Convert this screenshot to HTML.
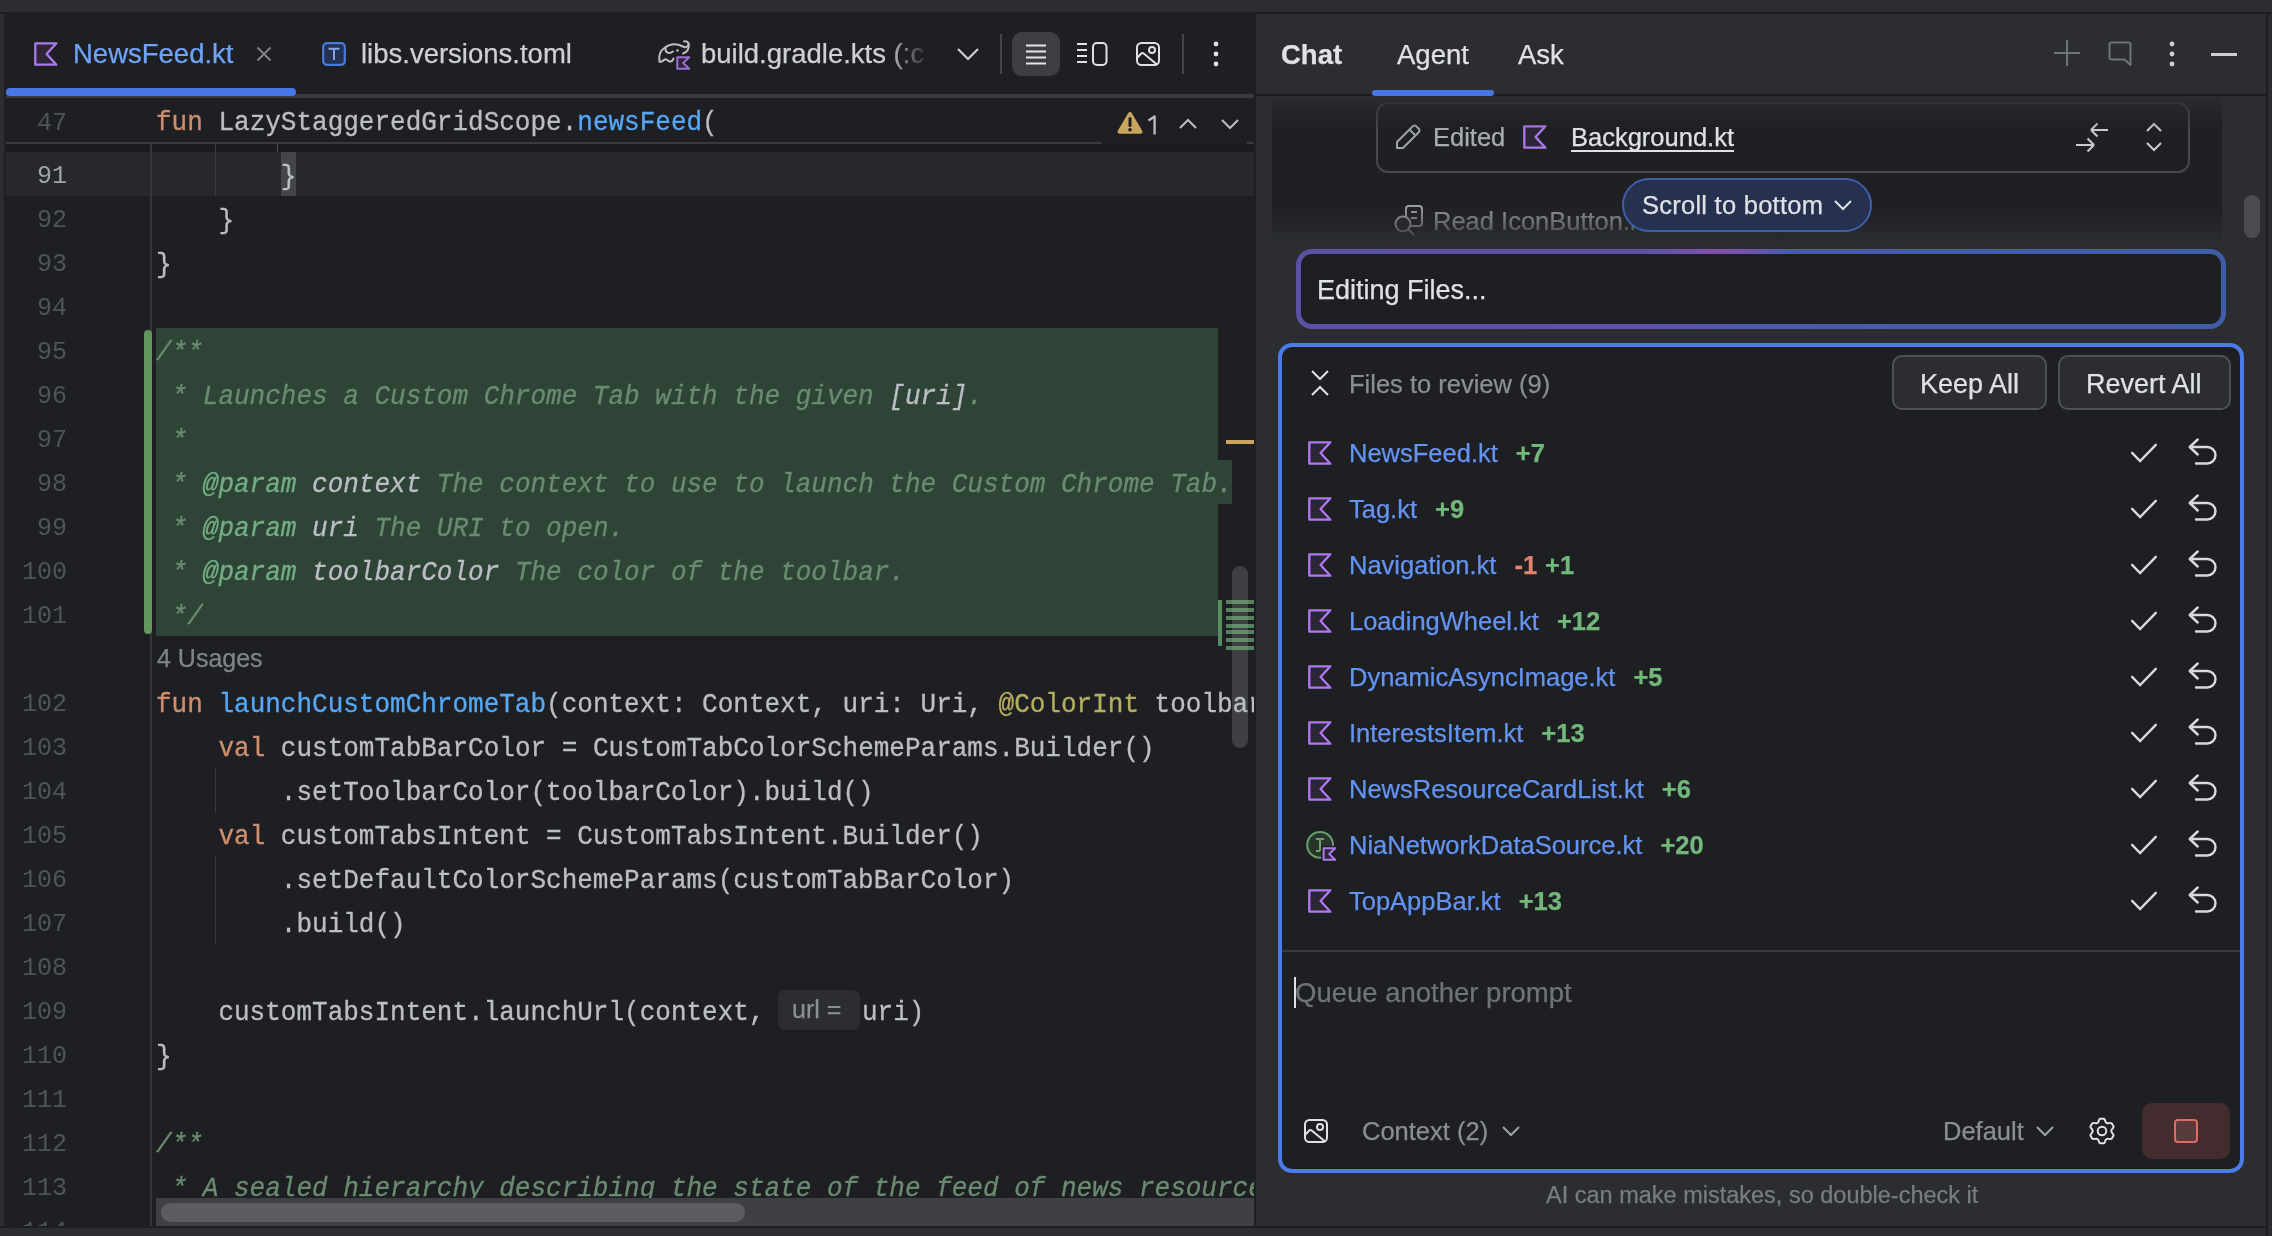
<!DOCTYPE html>
<html><head><meta charset="utf-8"><style>
html,body{margin:0;padding:0;}
body{width:2272px;height:1236px;overflow:hidden;background:#2b2d30;position:relative;font-family:'Liberation Sans',sans-serif;}
body div, body svg{position:absolute;white-space:pre;}
body div{-webkit-text-stroke-width:0.25px;}
body div span{position:static;}
</style></head><body>
<div style="left:0;top:0;width:2272px;height:1236px;will-change:transform">
<div style="left:0px;top:12px;width:2272px;height:2px;background:#1e1f22"></div>
<div style="left:4px;top:12px;width:1250px;height:1214px;background:#1e1f22"></div>
<div style="left:1254px;top:12px;width:2px;height:1216px;background:#1e1f22"></div>
<div style="left:0px;top:1226px;width:2266px;height:2px;background:#1e1f22"></div>
<div style="left:2266px;top:12px;width:2px;height:1224px;background:#1e1f22"></div>
<div style="left:6px;top:94px;width:1248px;height:4px;background:#393b40"></div>
<div style="left:6px;top:88px;width:290px;height:8px;background:#4677e8;border-radius:4px"></div>
<svg style="left:34px;top:42px;" width="24" height="24" viewBox="0 0 24 24" fill="none"><path d="M1.3 1.3H22.4L12.6 12L22.4 22.7H1.3Z" fill="#2d2637" stroke="#ae79ee" stroke-width="2.3" stroke-linejoin="round"/></svg>
<div style="left:73px;top:35.47px;height:38px;line-height:38px;font-family:'Liberation Sans',sans-serif;font-size:27.5px;color:#6fa2f8;font-weight:400;letter-spacing:0px">NewsFeed.kt</div>
<svg style="left:256px;top:46px;" width="16" height="16" viewBox="0 0 16 16" fill="none"><path d="M1.5 1.5L14.5 14.5M14.5 1.5L1.5 14.5" stroke="#7f8186" stroke-width="2"/></svg>
<svg style="left:322px;top:42px;" width="24" height="24" viewBox="0 0 24 24" fill="none"><rect x="1.2" y="1.2" width="21.6" height="21.6" rx="3.5" fill="#243150" stroke="#4a78dc" stroke-width="2.2"/><path d="M6.5 6.8H17.5M12 6.8V18" stroke="#86a6ea" stroke-width="2"/></svg>
<div style="left:361px;top:35.47px;height:38px;line-height:38px;font-family:'Liberation Sans',sans-serif;font-size:27.5px;color:#ced0d6;font-weight:400;">libs.versions.toml</div>
<svg style="left:650px;top:30px;" width="50" height="50" viewBox="0 0 50 50" fill="none"><g stroke="#bdbfc4" stroke-width="2" stroke-linecap="round" fill="none"><path d="M9.5 31.5C8.5 26 10.5 20.5 15 17.5C20 13.5 27 13.5 33 16.5C35.5 17.8 37.5 17 38.3 15C39 12.5 37 10.5 34 11.5"/><path d="M38.6 13.5C39.5 18 37.5 22.5 33 23.5"/><path d="M15.5 17.5C15 22 18 25 23 21.5"/><path d="M9.5 31.5C11 32.5 13 31 14.5 29.5C16 28.5 18 31 19.5 31.5C21.5 32 23 30 23.5 28.5"/></g><circle cx="27.5" cy="20.5" r="1.3" fill="#bdbfc4"/><path d="M27.3 27.3H39.2L33.2 33L39.2 38.7H27.3Z" fill="#2d2637" stroke="#9c6fd6" stroke-width="2" stroke-linejoin="round"/></svg>
<div style="left:701px;top:35.47px;height:38px;line-height:38px;font-family:'Liberation Sans',sans-serif;font-size:27.5px;color:#ced0d6;font-weight:400;width:230px;overflow:hidden;-webkit-mask-image:linear-gradient(90deg,#000 80%,transparent 100%)">build.gradle.kts (:c</div>
<svg style="left:956px;top:46px;" width="24" height="16" viewBox="0 0 24 16" fill="none"><path d="M2 3L12 13L22 3" stroke="#ced0d6" stroke-width="2.2"/></svg>
<div style="left:1000px;top:34px;width:2px;height:40px;background:#43454a"></div>
<div style="left:1012px;top:32px;width:48px;height:44px;background:#3c3e43;border-radius:10px"></div>
<svg style="left:1024px;top:42px;" width="24" height="24" viewBox="0 0 24 24" fill="none"><path d="M2 3.5H22M2 9.5H22M2 15.5H22M2 21.5H22" stroke="#e4e5e8" stroke-width="2"/></svg>
<svg style="left:1076px;top:40px;" width="32" height="28" viewBox="0 0 32 28" fill="none"><path d="M1 4H11M1 10H11M1 16H11M1 22H11" stroke="#dfe1e5" stroke-width="2"/><rect x="17" y="3" width="13.5" height="22" rx="4" stroke="#dfe1e5" stroke-width="2"/></svg>
<svg style="left:1134px;top:40px;" width="28" height="28" viewBox="0 0 28 28" fill="none"><rect x="3" y="3" width="22" height="22" rx="4.5" stroke="#dfe1e5" stroke-width="2"/><circle cx="18" cy="10" r="3" stroke="#dfe1e5" stroke-width="2"/><path d="M3.5 17.5L7 13.8Q8.3 12.4 9.7 13.6L23 24.5" stroke="#dfe1e5" stroke-width="2" stroke-linejoin="round"/></svg>
<div style="left:1182px;top:34px;width:2px;height:40px;background:#43454a"></div>
<svg style="left:1210px;top:40px;" width="12" height="30" viewBox="0 0 12 30" fill="none"><circle cx="6" cy="4" r="2.4" fill="#dfe1e5"/><circle cx="6" cy="14" r="2.4" fill="#dfe1e5"/><circle cx="6" cy="24" r="2.4" fill="#dfe1e5"/></svg>
<div style="left:6px;top:152px;width:1248px;height:44px;background:#26282e"></div>
<div style="left:0px;width:67px;top:107.35px;height:34px;line-height:34px;text-align:right;font-family:'Liberation Mono',monospace;font-size:25px;color:#4f545b;-webkit-text-stroke-width:0">47</div>
<div style="left:156.0px;top:105.08px;height:36px;line-height:36px;font-family:'Liberation Mono',monospace;font-size:26px;color:#bcbec4;font-weight:400;transform:scaleY(1.06);transform-origin:0 24.92px;-webkit-text-stroke:0.3px;"><span style="color:#cf8e6d;">fun </span><span style="color:#bcbec4;">LazyStaggeredGridScope.</span><span style="color:#56a8f5;">newsFeed</span><span style="color:#bcbec4;">(</span></div>
<div style="left:6px;top:142px;width:1096px;height:2px;background:#393b40"></div>
<div style="left:1247px;top:142px;width:7px;height:2px;background:#393b40"></div>
<div style="left:6px;top:144px;width:1248px;height:8px;background:#1b1c1f"></div>
<div style="left:150px;top:144px;width:2px;height:1082px;background:#35373b"></div>
<svg style="left:1116px;top:110px;" width="28" height="26" viewBox="0 0 28 26" fill="none"><path d="M14 4L24.5 21.8H3.5Z" fill="#c8a45c" stroke="#c8a45c" stroke-width="4" stroke-linejoin="round"/><path d="M14 8.5V15.5" stroke="#1e1f22" stroke-width="3" stroke-linecap="round"/><circle cx="14" cy="19.8" r="1.8" fill="#1e1f22"/></svg>
<svg style="left:1146px;top:114.5px;" width="14" height="21" viewBox="0 0 14 21" fill="none"><path d="M2.5 5.5L8.6 1.5V19.5" stroke="#bcbec4" stroke-width="2.3" stroke-linejoin="round"/></svg>
<svg style="left:1178px;top:116px;" width="20" height="16" viewBox="0 0 20 16" fill="none"><path d="M2 12L10 4L18 12" stroke="#bcbec4" stroke-width="2"/></svg>
<svg style="left:1220px;top:116px;" width="20" height="16" viewBox="0 0 20 16" fill="none"><path d="M2 4L10 12L18 4" stroke="#bcbec4" stroke-width="2"/></svg>
<div style="left:215px;top:144px;width:1px;height:52px;background:#393b40"></div>
<div style="left:277px;top:144px;width:1px;height:8px;background:#4e5157"></div>
<div style="left:215px;top:768px;width:1px;height:44px;background:#393b40"></div>
<div style="left:215px;top:856px;width:1px;height:88px;background:#393b40"></div>
<div style="left:156px;top:328px;width:1062px;height:308px;background:#2e4436"></div>
<div style="left:1218px;top:460px;width:14px;height:44px;background:#2e4436"></div>
<div style="left:144px;top:330px;width:8px;height:304px;background:#62965f;border-radius:4px"></div>
<div style="left:281px;top:152px;width:15px;height:44px;background:#43454a"></div>
<div style="left:1232px;top:566px;width:16px;height:182px;background:#3e4044;border-radius:8px"></div>
<div style="left:0;top:144px;width:1254px;height:1082px;overflow:hidden">
<div style="left:0px;width:67px;top:16.35px;height:34px;line-height:34px;text-align:right;font-family:'Liberation Mono',monospace;font-size:25px;color:#a1a3ab;-webkit-text-stroke-width:0">91</div>
<div style="left:156.0px;top:15.08px;height:36px;line-height:36px;font-family:'Liberation Mono',monospace;font-size:26px;color:#bcbec4;font-weight:400;transform:scaleY(1.06);transform-origin:0 24.92px;-webkit-text-stroke:0.3px;"><span style="color:#bcbec4;">        }</span></div>
<div style="left:0px;width:67px;top:60.35px;height:34px;line-height:34px;text-align:right;font-family:'Liberation Mono',monospace;font-size:25px;color:#4f545b;-webkit-text-stroke-width:0">92</div>
<div style="left:156.0px;top:59.08px;height:36px;line-height:36px;font-family:'Liberation Mono',monospace;font-size:26px;color:#bcbec4;font-weight:400;transform:scaleY(1.06);transform-origin:0 24.92px;-webkit-text-stroke:0.3px;"><span style="color:#bcbec4;">    }</span></div>
<div style="left:0px;width:67px;top:104.35px;height:34px;line-height:34px;text-align:right;font-family:'Liberation Mono',monospace;font-size:25px;color:#4f545b;-webkit-text-stroke-width:0">93</div>
<div style="left:156.0px;top:103.08px;height:36px;line-height:36px;font-family:'Liberation Mono',monospace;font-size:26px;color:#bcbec4;font-weight:400;transform:scaleY(1.06);transform-origin:0 24.92px;-webkit-text-stroke:0.3px;"><span style="color:#bcbec4;">}</span></div>
<div style="left:0px;width:67px;top:148.35px;height:34px;line-height:34px;text-align:right;font-family:'Liberation Mono',monospace;font-size:25px;color:#4f545b;-webkit-text-stroke-width:0">94</div>
<div style="left:0px;width:67px;top:192.35px;height:34px;line-height:34px;text-align:right;font-family:'Liberation Mono',monospace;font-size:25px;color:#4f545b;-webkit-text-stroke-width:0">95</div>
<div style="left:156.0px;top:191.08px;height:36px;line-height:36px;font-family:'Liberation Mono',monospace;font-size:26px;color:#bcbec4;font-weight:400;transform:scaleY(1.06);transform-origin:0 24.92px;-webkit-text-stroke:0.3px;"><span style="color:#6a8b71;font-style:italic;">/**</span></div>
<div style="left:0px;width:67px;top:236.35px;height:34px;line-height:34px;text-align:right;font-family:'Liberation Mono',monospace;font-size:25px;color:#4f545b;-webkit-text-stroke-width:0">96</div>
<div style="left:156.0px;top:235.08px;height:36px;line-height:36px;font-family:'Liberation Mono',monospace;font-size:26px;color:#bcbec4;font-weight:400;transform:scaleY(1.06);transform-origin:0 24.92px;-webkit-text-stroke:0.3px;"><span style="color:#6a8b71;font-style:italic;"> * Launches a Custom Chrome Tab with the given </span><span style="color:#bcbec4;font-style:italic;">[uri]</span><span style="color:#6a8b71;font-style:italic;">.</span></div>
<div style="left:0px;width:67px;top:280.35px;height:34px;line-height:34px;text-align:right;font-family:'Liberation Mono',monospace;font-size:25px;color:#4f545b;-webkit-text-stroke-width:0">97</div>
<div style="left:156.0px;top:279.08px;height:36px;line-height:36px;font-family:'Liberation Mono',monospace;font-size:26px;color:#bcbec4;font-weight:400;transform:scaleY(1.06);transform-origin:0 24.92px;-webkit-text-stroke:0.3px;"><span style="color:#6a8b71;font-style:italic;"> *</span></div>
<div style="left:0px;width:67px;top:324.35px;height:34px;line-height:34px;text-align:right;font-family:'Liberation Mono',monospace;font-size:25px;color:#4f545b;-webkit-text-stroke-width:0">98</div>
<div style="left:156.0px;top:323.08px;height:36px;line-height:36px;font-family:'Liberation Mono',monospace;font-size:26px;color:#bcbec4;font-weight:400;transform:scaleY(1.06);transform-origin:0 24.92px;-webkit-text-stroke:0.3px;"><span style="color:#6a8b71;font-style:italic;"> * </span><span style="color:#72ad83;font-style:italic;">@param</span><span style="color:#6a8b71;font-style:italic;"> </span><span style="color:#bcbec4;font-style:italic;">context</span><span style="color:#6a8b71;font-style:italic;"> The context to use to launch the Custom Chrome Tab.</span></div>
<div style="left:0px;width:67px;top:368.35px;height:34px;line-height:34px;text-align:right;font-family:'Liberation Mono',monospace;font-size:25px;color:#4f545b;-webkit-text-stroke-width:0">99</div>
<div style="left:156.0px;top:367.08px;height:36px;line-height:36px;font-family:'Liberation Mono',monospace;font-size:26px;color:#bcbec4;font-weight:400;transform:scaleY(1.06);transform-origin:0 24.92px;-webkit-text-stroke:0.3px;"><span style="color:#6a8b71;font-style:italic;"> * </span><span style="color:#72ad83;font-style:italic;">@param</span><span style="color:#6a8b71;font-style:italic;"> </span><span style="color:#bcbec4;font-style:italic;">uri</span><span style="color:#6a8b71;font-style:italic;"> The URI to open.</span></div>
<div style="left:0px;width:67px;top:412.35px;height:34px;line-height:34px;text-align:right;font-family:'Liberation Mono',monospace;font-size:25px;color:#4f545b;-webkit-text-stroke-width:0">100</div>
<div style="left:156.0px;top:411.08px;height:36px;line-height:36px;font-family:'Liberation Mono',monospace;font-size:26px;color:#bcbec4;font-weight:400;transform:scaleY(1.06);transform-origin:0 24.92px;-webkit-text-stroke:0.3px;"><span style="color:#6a8b71;font-style:italic;"> * </span><span style="color:#72ad83;font-style:italic;">@param</span><span style="color:#6a8b71;font-style:italic;"> </span><span style="color:#bcbec4;font-style:italic;">toolbarColor</span><span style="color:#6a8b71;font-style:italic;"> The color of the toolbar.</span></div>
<div style="left:0px;width:67px;top:456.35px;height:34px;line-height:34px;text-align:right;font-family:'Liberation Mono',monospace;font-size:25px;color:#4f545b;-webkit-text-stroke-width:0">101</div>
<div style="left:156.0px;top:455.08px;height:36px;line-height:36px;font-family:'Liberation Mono',monospace;font-size:26px;color:#bcbec4;font-weight:400;transform:scaleY(1.06);transform-origin:0 24.92px;-webkit-text-stroke:0.3px;"><span style="color:#6a8b71;font-style:italic;"> */</span></div>
<div style="left:157px;top:497.33px;height:35px;line-height:35px;font-family:'Liberation Sans',sans-serif;font-size:25px;color:#80848b;font-weight:400;">4 Usages</div>
<div style="left:0px;width:67px;top:544.35px;height:34px;line-height:34px;text-align:right;font-family:'Liberation Mono',monospace;font-size:25px;color:#4f545b;-webkit-text-stroke-width:0">102</div>
<div style="left:156.0px;top:543.08px;height:36px;line-height:36px;font-family:'Liberation Mono',monospace;font-size:26px;color:#bcbec4;font-weight:400;transform:scaleY(1.06);transform-origin:0 24.92px;-webkit-text-stroke:0.3px;"><span style="color:#cf8e6d;">fun </span><span style="color:#56a8f5;">launchCustomChromeTab</span><span style="color:#bcbec4;">(context: Context, uri: Uri, </span><span style="color:#b3ae60;">@ColorInt</span><span style="color:#bcbec4;"> toolbarColor: Int) {</span></div>
<div style="left:0px;width:67px;top:588.35px;height:34px;line-height:34px;text-align:right;font-family:'Liberation Mono',monospace;font-size:25px;color:#4f545b;-webkit-text-stroke-width:0">103</div>
<div style="left:156.0px;top:587.08px;height:36px;line-height:36px;font-family:'Liberation Mono',monospace;font-size:26px;color:#bcbec4;font-weight:400;transform:scaleY(1.06);transform-origin:0 24.92px;-webkit-text-stroke:0.3px;"><span style="color:#bcbec4;">    </span><span style="color:#cf8e6d;">val </span><span style="color:#bcbec4;">customTabBarColor = CustomTabColorSchemeParams.Builder()</span></div>
<div style="left:0px;width:67px;top:632.35px;height:34px;line-height:34px;text-align:right;font-family:'Liberation Mono',monospace;font-size:25px;color:#4f545b;-webkit-text-stroke-width:0">104</div>
<div style="left:156.0px;top:631.08px;height:36px;line-height:36px;font-family:'Liberation Mono',monospace;font-size:26px;color:#bcbec4;font-weight:400;transform:scaleY(1.06);transform-origin:0 24.92px;-webkit-text-stroke:0.3px;"><span style="color:#bcbec4;">        .setToolbarColor(toolbarColor).build()</span></div>
<div style="left:0px;width:67px;top:676.35px;height:34px;line-height:34px;text-align:right;font-family:'Liberation Mono',monospace;font-size:25px;color:#4f545b;-webkit-text-stroke-width:0">105</div>
<div style="left:156.0px;top:675.08px;height:36px;line-height:36px;font-family:'Liberation Mono',monospace;font-size:26px;color:#bcbec4;font-weight:400;transform:scaleY(1.06);transform-origin:0 24.92px;-webkit-text-stroke:0.3px;"><span style="color:#bcbec4;">    </span><span style="color:#cf8e6d;">val </span><span style="color:#bcbec4;">customTabsIntent = CustomTabsIntent.Builder()</span></div>
<div style="left:0px;width:67px;top:720.35px;height:34px;line-height:34px;text-align:right;font-family:'Liberation Mono',monospace;font-size:25px;color:#4f545b;-webkit-text-stroke-width:0">106</div>
<div style="left:156.0px;top:719.08px;height:36px;line-height:36px;font-family:'Liberation Mono',monospace;font-size:26px;color:#bcbec4;font-weight:400;transform:scaleY(1.06);transform-origin:0 24.92px;-webkit-text-stroke:0.3px;"><span style="color:#bcbec4;">        .setDefaultColorSchemeParams(customTabBarColor)</span></div>
<div style="left:0px;width:67px;top:764.35px;height:34px;line-height:34px;text-align:right;font-family:'Liberation Mono',monospace;font-size:25px;color:#4f545b;-webkit-text-stroke-width:0">107</div>
<div style="left:156.0px;top:763.08px;height:36px;line-height:36px;font-family:'Liberation Mono',monospace;font-size:26px;color:#bcbec4;font-weight:400;transform:scaleY(1.06);transform-origin:0 24.92px;-webkit-text-stroke:0.3px;"><span style="color:#bcbec4;">        .build()</span></div>
<div style="left:0px;width:67px;top:808.35px;height:34px;line-height:34px;text-align:right;font-family:'Liberation Mono',monospace;font-size:25px;color:#4f545b;-webkit-text-stroke-width:0">108</div>
<div style="left:0px;width:67px;top:852.35px;height:34px;line-height:34px;text-align:right;font-family:'Liberation Mono',monospace;font-size:25px;color:#4f545b;-webkit-text-stroke-width:0">109</div>
<div style="left:156.0px;top:851.08px;height:36px;line-height:36px;font-family:'Liberation Mono',monospace;font-size:26px;color:#bcbec4;font-weight:400;transform:scaleY(1.06);transform-origin:0 24.92px;-webkit-text-stroke:0.3px;"><span style="color:#bcbec4;">    customTabsIntent.launchUrl(context, </span></div>
<div style="left:0px;width:67px;top:896.35px;height:34px;line-height:34px;text-align:right;font-family:'Liberation Mono',monospace;font-size:25px;color:#4f545b;-webkit-text-stroke-width:0">110</div>
<div style="left:156.0px;top:895.08px;height:36px;line-height:36px;font-family:'Liberation Mono',monospace;font-size:26px;color:#bcbec4;font-weight:400;transform:scaleY(1.06);transform-origin:0 24.92px;-webkit-text-stroke:0.3px;"><span style="color:#bcbec4;">}</span></div>
<div style="left:0px;width:67px;top:940.35px;height:34px;line-height:34px;text-align:right;font-family:'Liberation Mono',monospace;font-size:25px;color:#4f545b;-webkit-text-stroke-width:0">111</div>
<div style="left:0px;width:67px;top:984.35px;height:34px;line-height:34px;text-align:right;font-family:'Liberation Mono',monospace;font-size:25px;color:#4f545b;-webkit-text-stroke-width:0">112</div>
<div style="left:156.0px;top:983.08px;height:36px;line-height:36px;font-family:'Liberation Mono',monospace;font-size:26px;color:#bcbec4;font-weight:400;transform:scaleY(1.06);transform-origin:0 24.92px;-webkit-text-stroke:0.3px;"><span style="color:#6a8b71;font-style:italic;">/**</span></div>
<div style="left:0px;width:67px;top:1028.35px;height:34px;line-height:34px;text-align:right;font-family:'Liberation Mono',monospace;font-size:25px;color:#4f545b;-webkit-text-stroke-width:0">113</div>
<div style="left:156.0px;top:1027.08px;height:36px;line-height:36px;font-family:'Liberation Mono',monospace;font-size:26px;color:#bcbec4;font-weight:400;transform:scaleY(1.06);transform-origin:0 24.92px;-webkit-text-stroke:0.3px;"><span style="color:#6a8b71;font-style:italic;"> * A sealed hierarchy describing the state of the feed of news resources.</span></div>
<div style="left:0px;width:67px;top:1072.35px;height:34px;line-height:34px;text-align:right;font-family:'Liberation Mono',monospace;font-size:25px;color:#4f545b;-webkit-text-stroke-width:0">114</div>
<div style="left:156.0px;top:1071.08px;height:36px;line-height:36px;font-family:'Liberation Mono',monospace;font-size:26px;color:#bcbec4;font-weight:400;transform:scaleY(1.06);transform-origin:0 24.92px;-webkit-text-stroke:0.3px;"><span style="color:#6a8b71;font-style:italic;"> */</span></div>
<div style="left:778px;top:846px;width:82px;height:40px;background:#2b2d30;border-radius:7px"></div>
<div style="left:792px;top:847.83px;height:35px;line-height:35px;font-family:'Liberation Sans',sans-serif;font-size:25px;color:#8c8f94;font-weight:400;">url =</div>
<div style="left:862.0px;top:851.08px;height:36px;line-height:36px;font-family:'Liberation Mono',monospace;font-size:26px;color:#bcbec4;font-weight:400;transform:scaleY(1.06);transform-origin:0 24.92px;-webkit-text-stroke:0.3px;"><span style="color:#bcbec4;">uri)</span></div>
</div>
<div style="left:1226px;top:440px;width:28px;height:4px;background:#c8a45c"></div>
<div style="left:1218px;top:600px;width:4px;height:46px;background:#5a8a62"></div>
<div style="left:1226px;top:600px;width:28px;height:4px;background:rgba(120,190,128,0.62)"></div>
<div style="left:1226px;top:608px;width:28px;height:4px;background:rgba(120,190,128,0.62)"></div>
<div style="left:1226px;top:616px;width:28px;height:4px;background:rgba(120,190,128,0.62)"></div>
<div style="left:1226px;top:624px;width:28px;height:4px;background:rgba(120,190,128,0.62)"></div>
<div style="left:1226px;top:630px;width:28px;height:4px;background:rgba(120,190,128,0.62)"></div>
<div style="left:1226px;top:638px;width:28px;height:4px;background:rgba(120,190,128,0.62)"></div>
<div style="left:1226px;top:646px;width:28px;height:4px;background:rgba(120,190,128,0.62)"></div>
<div style="left:156px;top:1198px;width:1098px;height:28px;background:#3f4043"></div>
<div style="left:161px;top:1203px;width:584px;height:19px;background:#5b5d61;border-radius:10px"></div>
<div style="left:1281px;top:35.97px;height:38px;line-height:38px;font-family:'Liberation Sans',sans-serif;font-size:27.5px;color:#dfe1e5;font-weight:700;">Chat</div>
<div style="left:1397px;top:35.97px;height:38px;line-height:38px;font-family:'Liberation Sans',sans-serif;font-size:27.5px;color:#dfe1e5;font-weight:400;">Agent</div>
<div style="left:1518px;top:35.97px;height:38px;line-height:38px;font-family:'Liberation Sans',sans-serif;font-size:27.5px;color:#dfe1e5;font-weight:400;">Ask</div>
<div style="left:1256px;top:94px;width:1010px;height:2px;background:#1e1f22"></div>
<div style="left:1372px;top:90px;width:122px;height:6px;background:#4677e8;border-radius:3px"></div>
<svg style="left:2052px;top:38px;" width="30" height="30" viewBox="0 0 30 30" fill="none"><path d="M15 2V28M2 15H28" stroke="#6f737a" stroke-width="2"/></svg>
<svg style="left:2106px;top:40px;" width="28" height="28" viewBox="0 0 28 28" fill="none"><path d="M3.5 4.5Q3.5 2.5 5.5 2.5H22.5Q24.5 2.5 24.5 4.5V25L18.5 19.5H5.5Q3.5 19.5 3.5 17.5Z" stroke="#6f737a" stroke-width="2" stroke-linejoin="round"/></svg>
<svg style="left:2166px;top:40px;" width="12" height="30" viewBox="0 0 12 30" fill="none"><circle cx="6" cy="4" r="2.4" fill="#ced0d6"/><circle cx="6" cy="14" r="2.4" fill="#ced0d6"/><circle cx="6" cy="24" r="2.4" fill="#ced0d6"/></svg>
<div style="left:2211px;top:53px;width:26px;height:2.5px;background:#ced0d6"></div>
<div style="left:1272px;top:96px;width:950px;height:148px;background:#1f2023"></div>
<div style="left:2244px;top:195px;width:16px;height:43px;background:#4a4c50;border-radius:8px"></div>
<div style="left:1376px;top:102px;width:810px;height:67px;border:2px solid #47494e;border-radius:12px;background:transparent"></div>
<svg style="left:1394px;top:122px;" width="28" height="28" viewBox="0 0 28 28" fill="none"><path d="M3 26V20L18.5 4.5Q20.5 2.5 22.5 4.5L24.5 6.5Q26.5 8.5 24.5 10.5L9 26Z" stroke="#9fa2a8" stroke-width="2" stroke-linejoin="round"/><path d="M15.5 7.5L21.5 13.5" stroke="#9fa2a8" stroke-width="2"/></svg>
<div style="left:1433px;top:119.16px;height:36px;line-height:36px;font-family:'Liberation Sans',sans-serif;font-size:25.5px;color:#a9acb1;font-weight:400;">Edited</div>
<svg style="left:1523px;top:125px;" width="24" height="24" viewBox="0 0 24 24" fill="none"><path d="M1.3 1.3H22.4L12.6 12L22.4 22.7H1.3Z" fill="#2d2637" stroke="#ae79ee" stroke-width="2.3" stroke-linejoin="round"/></svg>
<div style="left:1571px;top:119.16px;height:36px;line-height:36px;font-family:'Liberation Sans',sans-serif;font-size:25.5px;color:#dfe1e5;font-weight:400;text-decoration:underline;text-underline-offset:4px;text-decoration-thickness:2px;text-decoration-skip-ink:none">Background.kt</div>
<svg style="left:2074px;top:120px;" width="36" height="32" viewBox="0 0 36 32" fill="none"><path d="M34 10H17M17 10L23.5 3.5M17 10L23.5 16.5" stroke="#c9cbcf" stroke-width="2"/><path d="M2 25H20M20 25L13.5 18.5M20 25L13.5 31.5" stroke="#c9cbcf" stroke-width="2"/></svg>
<svg style="left:2144px;top:122px;" width="20" height="30" viewBox="0 0 20 30" fill="none"><path d="M3 9L10 2L17 9M3 21L10 28L17 21" stroke="#c9cbcf" stroke-width="2"/></svg>
<svg style="left:1393px;top:204px;" width="32" height="34" viewBox="0 0 32 34" fill="none"><rect x="13" y="2" width="16" height="20" rx="3" stroke="#a0a3a9" stroke-width="2"/><path d="M18 8H24M18 14H24" stroke="#a0a3a9" stroke-width="2"/><circle cx="10" cy="20" r="7.5" fill="#26272a" stroke="#a0a3a9" stroke-width="2"/><path d="M15.5 25.5L21 31" stroke="#a0a3a9" stroke-width="2"/></svg>
<div style="left:1433px;top:203.16px;height:36px;line-height:36px;font-family:'Liberation Sans',sans-serif;font-size:25.5px;color:#9a9da3;font-weight:400;">Read IconButton.kt</div>
<div style="left:1272px;top:96px;width:950px;height:34px;background:linear-gradient(180deg,rgba(43,45,48,1) 0%,rgba(43,45,48,0.55) 35%,rgba(43,45,48,0) 100%)"></div>
<div style="left:1272px;top:204px;width:950px;height:40px;background:linear-gradient(180deg,rgba(43,45,48,0) 0%,rgba(43,45,48,0.5) 55%,rgba(43,45,48,1) 100%)"></div>
<div style="left:1622px;top:178px;width:250px;height:54px;background:#263150;border:2px solid #3f5fab;border-radius:28px;box-sizing:border-box"></div>
<div style="left:1642px;top:187.16px;height:36px;line-height:36px;font-family:'Liberation Sans',sans-serif;font-size:25.5px;color:#dfe1e5;font-weight:400;letter-spacing:0.25px">Scroll to bottom</div>
<svg style="left:1832px;top:198px;" width="22" height="14" viewBox="0 0 22 14" fill="none"><path d="M3 3L11 11L19 3" stroke="#dfe1e5" stroke-width="2"/></svg>
<div style="left:1296px;top:249px;width:930px;height:80px;background:radial-gradient(ellipse 70px 14px at 425px 0px,#8a4fae 0%,rgba(138,79,174,0) 100%),linear-gradient(90deg,#5b51a5 0%,#5f52a6 38%,#4b5ba9 50%,#3f5ea6 100%);border-radius:16px"></div>
<div style="left:1301px;top:254px;width:920px;height:70px;background:#1e1f22;border-radius:11px"></div>
<div style="left:1317px;top:270.64px;height:38px;line-height:38px;font-family:'Liberation Sans',sans-serif;font-size:27px;color:#dfe1e5;font-weight:400;">Editing Files...</div>
<div style="left:1278px;top:343px;width:966px;height:830px;border:4px solid #4a7be8;border-radius:14px;background:#1e1f22;box-sizing:border-box"></div>
<svg style="left:1309px;top:368px;" width="22" height="30" viewBox="0 0 22 30" fill="none"><path d="M3 3L11 11L19 3M3 27L11 19L19 27" stroke="#dfe1e5" stroke-width="2"/></svg>
<div style="left:1349px;top:366.16px;height:36px;line-height:36px;font-family:'Liberation Sans',sans-serif;font-size:25.5px;color:#8b8e94;font-weight:400;">Files to review (9)</div>
<div style="left:1892px;top:355px;width:155px;height:55px;background:#2b2d30;border:2px solid #4e5157;border-radius:10px;box-sizing:border-box"></div>
<div style="left:1920px;top:365.14px;height:38px;line-height:38px;font-family:'Liberation Sans',sans-serif;font-size:27px;color:#dfe1e5;font-weight:400;">Keep All</div>
<div style="left:2058px;top:355px;width:173px;height:55px;background:#2b2d30;border:2px solid #4e5157;border-radius:10px;box-sizing:border-box"></div>
<div style="left:2086px;top:365.14px;height:38px;line-height:38px;font-family:'Liberation Sans',sans-serif;font-size:27px;color:#dfe1e5;font-weight:400;">Revert All</div>
<svg style="left:1308px;top:441px;" width="24" height="24" viewBox="0 0 24 24" fill="none"><path d="M1.3 1.3H22.4L12.6 12L22.4 22.7H1.3Z" fill="#2d2637" stroke="#ae79ee" stroke-width="2.3" stroke-linejoin="round"/></svg>
<div style="left:1349px;top:435.16px;height:36px;line-height:36px;font-family:'Liberation Sans',sans-serif;font-size:25.5px;color:#6494f2;font-weight:400;">NewsFeed.kt<span style="color:#73b87b;font-weight:700;margin-left:18px">+7</span></div>
<svg style="left:2128px;top:441px;" width="30" height="22" viewBox="0 0 30 22" fill="none"><path d="M4.1 11.8L12.1 20L27.8 3.8" stroke="#d8dade" stroke-width="2.4" stroke-linecap="round"/></svg>
<svg style="left:2186px;top:437px;" width="32" height="30" viewBox="0 0 32 30" fill="none"><path d="M11.7 2.5L3.7 10L11.7 17.5M3.7 10H21.2A8.25 8.25 0 0 1 21.2 26.5H10" stroke="#d8dade" stroke-width="2.4" stroke-linecap="round" stroke-linejoin="round"/></svg>
<svg style="left:1308px;top:497px;" width="24" height="24" viewBox="0 0 24 24" fill="none"><path d="M1.3 1.3H22.4L12.6 12L22.4 22.7H1.3Z" fill="#2d2637" stroke="#ae79ee" stroke-width="2.3" stroke-linejoin="round"/></svg>
<div style="left:1349px;top:491.16px;height:36px;line-height:36px;font-family:'Liberation Sans',sans-serif;font-size:25.5px;color:#6494f2;font-weight:400;">Tag.kt<span style="color:#73b87b;font-weight:700;margin-left:18px">+9</span></div>
<svg style="left:2128px;top:497px;" width="30" height="22" viewBox="0 0 30 22" fill="none"><path d="M4.1 11.8L12.1 20L27.8 3.8" stroke="#d8dade" stroke-width="2.4" stroke-linecap="round"/></svg>
<svg style="left:2186px;top:493px;" width="32" height="30" viewBox="0 0 32 30" fill="none"><path d="M11.7 2.5L3.7 10L11.7 17.5M3.7 10H21.2A8.25 8.25 0 0 1 21.2 26.5H10" stroke="#d8dade" stroke-width="2.4" stroke-linecap="round" stroke-linejoin="round"/></svg>
<svg style="left:1308px;top:553px;" width="24" height="24" viewBox="0 0 24 24" fill="none"><path d="M1.3 1.3H22.4L12.6 12L22.4 22.7H1.3Z" fill="#2d2637" stroke="#ae79ee" stroke-width="2.3" stroke-linejoin="round"/></svg>
<div style="left:1349px;top:547.16px;height:36px;line-height:36px;font-family:'Liberation Sans',sans-serif;font-size:25.5px;color:#6494f2;font-weight:400;">Navigation.kt<span style="color:#e0826f;font-weight:700;margin-left:18px">-1</span><span style="color:#73b87b;font-weight:700;margin-left:8px">+1</span></div>
<svg style="left:2128px;top:553px;" width="30" height="22" viewBox="0 0 30 22" fill="none"><path d="M4.1 11.8L12.1 20L27.8 3.8" stroke="#d8dade" stroke-width="2.4" stroke-linecap="round"/></svg>
<svg style="left:2186px;top:549px;" width="32" height="30" viewBox="0 0 32 30" fill="none"><path d="M11.7 2.5L3.7 10L11.7 17.5M3.7 10H21.2A8.25 8.25 0 0 1 21.2 26.5H10" stroke="#d8dade" stroke-width="2.4" stroke-linecap="round" stroke-linejoin="round"/></svg>
<svg style="left:1308px;top:609px;" width="24" height="24" viewBox="0 0 24 24" fill="none"><path d="M1.3 1.3H22.4L12.6 12L22.4 22.7H1.3Z" fill="#2d2637" stroke="#ae79ee" stroke-width="2.3" stroke-linejoin="round"/></svg>
<div style="left:1349px;top:603.16px;height:36px;line-height:36px;font-family:'Liberation Sans',sans-serif;font-size:25.5px;color:#6494f2;font-weight:400;">LoadingWheel.kt<span style="color:#73b87b;font-weight:700;margin-left:18px">+12</span></div>
<svg style="left:2128px;top:609px;" width="30" height="22" viewBox="0 0 30 22" fill="none"><path d="M4.1 11.8L12.1 20L27.8 3.8" stroke="#d8dade" stroke-width="2.4" stroke-linecap="round"/></svg>
<svg style="left:2186px;top:605px;" width="32" height="30" viewBox="0 0 32 30" fill="none"><path d="M11.7 2.5L3.7 10L11.7 17.5M3.7 10H21.2A8.25 8.25 0 0 1 21.2 26.5H10" stroke="#d8dade" stroke-width="2.4" stroke-linecap="round" stroke-linejoin="round"/></svg>
<svg style="left:1308px;top:665px;" width="24" height="24" viewBox="0 0 24 24" fill="none"><path d="M1.3 1.3H22.4L12.6 12L22.4 22.7H1.3Z" fill="#2d2637" stroke="#ae79ee" stroke-width="2.3" stroke-linejoin="round"/></svg>
<div style="left:1349px;top:659.16px;height:36px;line-height:36px;font-family:'Liberation Sans',sans-serif;font-size:25.5px;color:#6494f2;font-weight:400;">DynamicAsyncImage.kt<span style="color:#73b87b;font-weight:700;margin-left:18px">+5</span></div>
<svg style="left:2128px;top:665px;" width="30" height="22" viewBox="0 0 30 22" fill="none"><path d="M4.1 11.8L12.1 20L27.8 3.8" stroke="#d8dade" stroke-width="2.4" stroke-linecap="round"/></svg>
<svg style="left:2186px;top:661px;" width="32" height="30" viewBox="0 0 32 30" fill="none"><path d="M11.7 2.5L3.7 10L11.7 17.5M3.7 10H21.2A8.25 8.25 0 0 1 21.2 26.5H10" stroke="#d8dade" stroke-width="2.4" stroke-linecap="round" stroke-linejoin="round"/></svg>
<svg style="left:1308px;top:721px;" width="24" height="24" viewBox="0 0 24 24" fill="none"><path d="M1.3 1.3H22.4L12.6 12L22.4 22.7H1.3Z" fill="#2d2637" stroke="#ae79ee" stroke-width="2.3" stroke-linejoin="round"/></svg>
<div style="left:1349px;top:715.16px;height:36px;line-height:36px;font-family:'Liberation Sans',sans-serif;font-size:25.5px;color:#6494f2;font-weight:400;">InterestsItem.kt<span style="color:#73b87b;font-weight:700;margin-left:18px">+13</span></div>
<svg style="left:2128px;top:721px;" width="30" height="22" viewBox="0 0 30 22" fill="none"><path d="M4.1 11.8L12.1 20L27.8 3.8" stroke="#d8dade" stroke-width="2.4" stroke-linecap="round"/></svg>
<svg style="left:2186px;top:717px;" width="32" height="30" viewBox="0 0 32 30" fill="none"><path d="M11.7 2.5L3.7 10L11.7 17.5M3.7 10H21.2A8.25 8.25 0 0 1 21.2 26.5H10" stroke="#d8dade" stroke-width="2.4" stroke-linecap="round" stroke-linejoin="round"/></svg>
<svg style="left:1308px;top:777px;" width="24" height="24" viewBox="0 0 24 24" fill="none"><path d="M1.3 1.3H22.4L12.6 12L22.4 22.7H1.3Z" fill="#2d2637" stroke="#ae79ee" stroke-width="2.3" stroke-linejoin="round"/></svg>
<div style="left:1349px;top:771.16px;height:36px;line-height:36px;font-family:'Liberation Sans',sans-serif;font-size:25.5px;color:#6494f2;font-weight:400;">NewsResourceCardList.kt<span style="color:#73b87b;font-weight:700;margin-left:18px">+6</span></div>
<svg style="left:2128px;top:777px;" width="30" height="22" viewBox="0 0 30 22" fill="none"><path d="M4.1 11.8L12.1 20L27.8 3.8" stroke="#d8dade" stroke-width="2.4" stroke-linecap="round"/></svg>
<svg style="left:2186px;top:773px;" width="32" height="30" viewBox="0 0 32 30" fill="none"><path d="M11.7 2.5L3.7 10L11.7 17.5M3.7 10H21.2A8.25 8.25 0 0 1 21.2 26.5H10" stroke="#d8dade" stroke-width="2.4" stroke-linecap="round" stroke-linejoin="round"/></svg>
<svg style="left:1305px;top:831px;" width="34" height="34" viewBox="0 0 34 34" fill="none"><circle cx="15.1" cy="13.9" r="12.9" fill="#28352a" stroke="#6aa16f" stroke-width="2"/><path d="M11 8H19M15 8V20M11 20H15" stroke="#6aa16f" stroke-width="2"/><path d="M18.6 17.2H30.2L24.2 23L30.2 28.8H18.6Z" fill="#2d2637" stroke="#1e1f22" stroke-width="5" stroke-linejoin="round"/><path d="M18.6 17.2H30.2L24.2 23L30.2 28.8H18.6Z" fill="#2d2637" stroke="#ae79ee" stroke-width="2" stroke-linejoin="round"/></svg>
<div style="left:1349px;top:827.16px;height:36px;line-height:36px;font-family:'Liberation Sans',sans-serif;font-size:25.5px;color:#6494f2;font-weight:400;">NiaNetworkDataSource.kt<span style="color:#73b87b;font-weight:700;margin-left:18px">+20</span></div>
<svg style="left:2128px;top:833px;" width="30" height="22" viewBox="0 0 30 22" fill="none"><path d="M4.1 11.8L12.1 20L27.8 3.8" stroke="#d8dade" stroke-width="2.4" stroke-linecap="round"/></svg>
<svg style="left:2186px;top:829px;" width="32" height="30" viewBox="0 0 32 30" fill="none"><path d="M11.7 2.5L3.7 10L11.7 17.5M3.7 10H21.2A8.25 8.25 0 0 1 21.2 26.5H10" stroke="#d8dade" stroke-width="2.4" stroke-linecap="round" stroke-linejoin="round"/></svg>
<svg style="left:1308px;top:889px;" width="24" height="24" viewBox="0 0 24 24" fill="none"><path d="M1.3 1.3H22.4L12.6 12L22.4 22.7H1.3Z" fill="#2d2637" stroke="#ae79ee" stroke-width="2.3" stroke-linejoin="round"/></svg>
<div style="left:1349px;top:883.16px;height:36px;line-height:36px;font-family:'Liberation Sans',sans-serif;font-size:25.5px;color:#6494f2;font-weight:400;">TopAppBar.kt<span style="color:#73b87b;font-weight:700;margin-left:18px">+13</span></div>
<svg style="left:2128px;top:889px;" width="30" height="22" viewBox="0 0 30 22" fill="none"><path d="M4.1 11.8L12.1 20L27.8 3.8" stroke="#d8dade" stroke-width="2.4" stroke-linecap="round"/></svg>
<svg style="left:2186px;top:885px;" width="32" height="30" viewBox="0 0 32 30" fill="none"><path d="M11.7 2.5L3.7 10L11.7 17.5M3.7 10H21.2A8.25 8.25 0 0 1 21.2 26.5H10" stroke="#d8dade" stroke-width="2.4" stroke-linecap="round" stroke-linejoin="round"/></svg>
<div style="left:1282px;top:950px;width:958px;height:2px;background:#393b40"></div>
<div style="left:1294px;top:977px;width:2px;height:31px;background:#dfe1e5"></div>
<div style="left:1295px;top:973.97px;height:38px;line-height:38px;font-family:'Liberation Sans',sans-serif;font-size:27.5px;color:#6f737a;font-weight:400;">Queue another prompt</div>
<svg style="left:1302px;top:1117px;" width="28" height="28" viewBox="0 0 28 28" fill="none"><rect x="3" y="3" width="22" height="22" rx="4.5" stroke="#dfe1e5" stroke-width="2"/><circle cx="18" cy="10" r="3" stroke="#dfe1e5" stroke-width="2"/><path d="M3.5 17.5L7 13.8Q8.3 12.4 9.7 13.6L23 24.5" stroke="#dfe1e5" stroke-width="2" stroke-linejoin="round"/></svg>
<div style="left:1362px;top:1113.16px;height:36px;line-height:36px;font-family:'Liberation Sans',sans-serif;font-size:25.5px;color:#8b8e94;font-weight:400;">Context (2)</div>
<svg style="left:1500px;top:1124px;" width="22" height="14" viewBox="0 0 22 14" fill="none"><path d="M3 3L11 11L19 3" stroke="#9fa2a8" stroke-width="2"/></svg>
<div style="left:1943px;top:1113.16px;height:36px;line-height:36px;font-family:'Liberation Sans',sans-serif;font-size:25.5px;color:#8b8e94;font-weight:400;">Default</div>
<svg style="left:2034px;top:1124px;" width="22" height="14" viewBox="0 0 22 14" fill="none"><path d="M3 3L11 11L19 3" stroke="#9fa2a8" stroke-width="2"/></svg>
<svg style="left:2088px;top:1117px;" width="28" height="28" viewBox="0 0 28 28" fill="none"><path d="M15.94 1.75L12.06 1.75C10.87 2.31 10.74 4.54 10.14 5.32Q9.32 5.90 8.42 6.31C7.44 6.45 5.44 5.44 4.36 6.20L2.42 9.56C2.31 10.87 4.18 12.09 4.55 13.01Q4.64 14.00 4.55 14.99C4.18 15.91 2.31 17.13 2.42 18.44L4.36 21.80C5.44 22.56 7.44 21.55 8.42 21.69Q9.32 22.10 10.14 22.68C10.74 23.46 10.87 25.69 12.06 26.25L15.94 26.25C17.13 25.69 17.26 23.46 17.86 22.68Q18.68 22.10 19.58 21.69C20.56 21.55 22.56 22.56 23.64 21.80L25.58 18.44C25.69 17.13 23.82 15.91 23.45 14.99Q23.36 14.00 23.45 13.01C23.82 12.09 25.69 10.87 25.58 9.56L23.64 6.20C22.56 5.44 20.56 6.45 19.58 6.31Q18.68 5.90 17.86 5.32C17.26 4.54 17.13 2.31 15.94 1.75Z" stroke="#dfe1e5" stroke-width="2" stroke-linejoin="round"/><circle cx="14" cy="14" r="4.3" stroke="#dfe1e5" stroke-width="2"/></svg>
<div style="left:2142px;top:1103px;width:88px;height:56px;background:#432c2d;border-radius:10px"></div>
<div style="left:2174px;top:1119px;width:24px;height:24px;background:#5a3b3c;border:2px solid #e06b66;border-radius:4px;box-sizing:border-box"></div>
<div style="left:1546px;top:1178.85px;height:33px;line-height:33px;font-family:'Liberation Sans',sans-serif;font-size:23.5px;color:#787c83;font-weight:400;">AI can make mistakes, so double-check it</div>
</div>
</body></html>
